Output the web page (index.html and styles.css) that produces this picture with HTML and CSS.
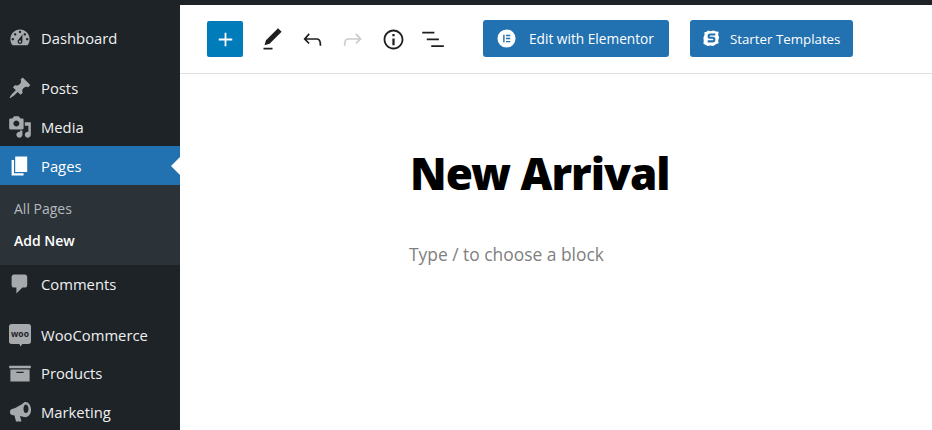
FILE: index.html
```html
<!DOCTYPE html>
<html lang="en">
<head>
<meta charset="utf-8">
<title>Edit Page</title>
<link rel="stylesheet" href="styles.css">
</head>
<body>
<div class="topbar"></div>
<div class="layout">
  <nav class="sidebar">
    <ul class="menu">
      <li class="item"><svg class="dash" viewBox="0 0 20 20"><path fill-rule="evenodd" d="M3.76 16h12.48c1.1-1.37 1.76-3.11 1.76-5 0-4.42-3.58-8-8-8s-8 3.58-8 8c0 1.89.66 3.63 1.76 5zM10 4c.55 0 1 .45 1 1s-.45 1-1 1-1-.45-1-1 .45-1 1-1zM6 6c.55 0 1 .45 1 1s-.45 1-1 1-1-.45-1-1 .45-1 1-1zm8 0c.55 0 1 .45 1 1s-.45 1-1 1-1-.45-1-1 .45-1 1-1zm-5.37 5.55L12 7v6c0 1.1-.9 2-2 2s-2-.9-2-2c0-.57.24-1.08.63-1.45zM4 10c.55 0 1 .45 1 1s-.45 1-1 1-1-.45-1-1 .45-1 1-1zm12 0c.55 0 1 .45 1 1s-.45 1-1 1-1-.45-1-1 .45-1 1-1zm-5 3c0-.55-.45-1-1-1s-1 .45-1 1 .45 1 1 1 1-.45 1-1z"/></svg><span>Dashboard</span></li>
      <li class="item sep"><svg class="dash" viewBox="0 0 20 20"><path d="M10.44 3.02l1.82-1.82 6.36 6.35-1.83 1.82c-1.05-.68-2.48-.57-3.41.36l-.75.75c-.92.93-1.04 2.35-.35 3.41l-1.83 1.82-2.41-2.41-2.8 2.79c-.42.42-3.38 2.71-3.8 2.29s1.86-3.39 2.28-3.81l2.79-2.79L4.1 9.36l1.83-1.82c1.05.69 2.48.57 3.4-.36l.75-.75c.93-.92 1.05-2.35.36-3.41z"/></svg><span>Posts</span></li>
      <li class="item"><svg class="dash" viewBox="0 0 20 20"><path fill-rule="evenodd" d="M13 11V4c0-.55-.45-1-1-1h-1.67L9 1H5L3.67 3H2c-.55 0-1 .45-1 1v7c0 .55.45 1 1 1h10c.55 0 1-.45 1-1zM7 4.500c1.380 0 2.500 1.120 2.500 2.500S8.380 9.500 7 9.500 4.500 8.380 4.500 7 5.620 4.500 7 4.500zM14 6h5v10.500c0 1.380-1.120 2.500-2.500 2.500S14 17.880 14 16.500s1.120-2.500 2.500-2.500c.17 0 .34.02.5.05V9h-3V6zm-4 8.050V13h2v3.500c0 1.380-1.120 2.500-2.500 2.500S7 17.880 7 16.500 8.120 14 9.500 14c.17 0 .34.02.5.05z"/></svg><span>Media</span></li>
      <li class="item current"><svg class="dash" viewBox="0 0 20 20"><path d="M6 15V2h10v13H6zm-1 1h8v2H3V5h2v11z"/></svg><span>Pages</span></li>
      <li class="submenu">
        <a class="sublink">All Pages</a>
        <a class="sublink active">Add New</a>
      </li>
      <li class="item"><svg class="dash" viewBox="0 0 20 20"><path d="M5 2h9c1.100 0 2 .9 2 2v7c0 1.100-.9 2-2 2h-2l-5 5v-5H5c-1.100 0-2-.9-2-2V4c0-1.100.9-2 2-2z"/></svg><span>Comments</span></li>
      <li class="item sep"><svg class="dash" viewBox="0 0 24 24"><path d="M3.500 1h17c1.500 0 2.500 1 2.500 2.500v15c0 1.500-1 2.500-2.500 2.500h-6l-2.300 2.500L11.500 21h-8C2 21 1 20 1 18.500v-15C1 2 2 1 3.500 1z"/><text class="woo-text" x="12" y="13.500" text-anchor="middle">woo</text></svg><span>WooCommerce</span></li>
      <li class="item"><svg class="dash" viewBox="0 0 20 20"><path fill-rule="evenodd" d="M19 4v2H1V4h18zM2 7h16v10H2V7zm11 3V9H7v1h6z"/></svg><span>Products</span></li>
      <li class="item"><svg class="dash" viewBox="0 0 24 24"><path fill-rule="evenodd" d="M16 2.500C13 5 8 8 4 9c-1.500.3-2 1.500-2 3s.5 2.500 2 3l2.500.5 1.500 6h5.500L12 16l4 1c4 1 7.500-3 7-8s-4-8-7-6.500zM18 4.500c-1.500 0-2.500 2-2.500 4.500s1 4 2.500 4 2.500-2 2.500-4-1-4.500-2.500-4.500z"/></svg><span>Marketing</span></li>
    </ul>
  </nav>
  <main class="editor">
    <header class="toolbar">
      <button class="inserter"><svg class="ico" viewBox="0 0 24 24"><path d="M18 11.200h-5.200V6h-1.600v5.200H6v1.600h5.200V18h1.600v-5.200H18z"/></svg></button>
      <div class="tools">
        <svg class="ico" viewBox="0 0 24 24"><path d="M20.100 5.100L16.900 2 6.200 12.700l-1.300 4.400 4.500-1.300L20.100 5.100zM4 20.800h8v-1.500H4v1.500z"/></svg>
        <svg class="ico" viewBox="0 0 24 24"><path d="M18.300 11.700c-.6-.6-1.400-.9-2.300-.9H6.700l2.900-3.300-1.100-1-4.500 5L8.500 16l1-1-2.700-2.700H16c.5 0 .9.2 1.300.5 1 1 1 3.400 1 4.500v.3h1.500v-.2c0-1.500 0-4.300-1.500-5.700z"/></svg>
        <svg class="ico off" viewBox="0 0 24 24"><path d="M15.600 6.500l-1.100 1 2.900 3.300H8c-.9 0-1.700.3-2.300.9-1.400 1.500-1.400 4.200-1.400 5.600v.2h1.500v-.3c0-1.100 0-3.500 1-4.500.3-.3.7-.5 1.300-.5h9.200L14.500 15l1.100 1.100 4.600-4.600-4.600-5z"/></svg>
        <svg class="ico" viewBox="0 0 24 24"><path d="M12 3.200c-4.800 0-8.800 3.900-8.800 8.800 0 4.800 3.900 8.800 8.800 8.800 4.800 0 8.800-3.900 8.800-8.800 0-4.800-4-8.800-8.800-8.800zm0 16c-4 0-7.200-3.300-7.200-7.200C4.800 8 8 4.800 12 4.800s7.200 3.300 7.200 7.200c0 4-3.200 7.200-7.200 7.200zM11 17h2v-6h-2v6zm0-8h2V7h-2v2z"/></svg>
        <svg class="ico" viewBox="0 0 24 24"><path d="M2 5.200h10.800v1.500H2zM6 11.200h10.800v1.500H6zM10 17.200h11.200v1.500H10z"/></svg>
      </div>
      <button class="wide elementor"><svg class="btn-ico" viewBox="0 0 20 20"><circle cx="10" cy="10" r="9.500" fill="#fff"/><path fill="#2271b1" d="M6.500 6h1.500v8H6.500zM9.500 6h4.500v1.500H9.500zM9.500 9.250h4.500v1.500H9.500zM9.500 12.500h4.500V14H9.500z"/></svg><span class="elementor-label">Edit with Elementor</span></button>
      <button class="wide starter"><svg class="btn-ico" viewBox="0 0 20 20"><path fill="#fff" d="M6 1.500l3 .8 3-.8 3 1 2.500 .5-.5 3 1 3-1 3 .5 3-3 1-2.500 2-3-.6-3 .6-2.500-1.500-2-.9.300-3L1.500 9l1.200-3-.2-2.500L5 3z"/><path fill="none" stroke="#2271b1" stroke-width="2.200" d="M14 5.800H8.500c-2 0-2 3.400 0 3.400h3c2 0 2 3.800 0 3.800H6"/></svg><span class="starter-label">Starter Templates</span></button>
    </header>
    <section class="canvas">
      <h1 class="title">New Arrival</h1>
      <p class="placeholder">Type / to choose a block</p>
    </section>
  </main>
</div>
</body>
</html>
```
FILE: styles.css
```css
* { box-sizing: border-box; }
html, body { margin: 0; height: 430px; overflow: hidden; background: #fff; }
body { font-family: "Open Sans", "Noto Sans", "Liberation Sans", sans-serif; }
.topbar { height: 5px; background: #1d2327; }
.layout { display: flex; height: 425px; }
.sidebar { width: 180px; flex: none; background: #1d2327; overflow: hidden; }
.menu { list-style: none; margin: 0; padding: 13.6px 0 0; }
.item { height: 38.6px; display: flex; align-items: center; padding-left: 8px; gap: 9px; color: #f0f0f1; font-size: 14.8px; position: relative; }
.sep { margin-top: 12px; }
.dash { width: 24px; height: 24px; fill: #a7aaad; flex: none; }
.woo-text { font-size: 8.500px; font-weight: 700; fill: #1d2327; font-family: "Open Sans", sans-serif; }
.current { background: #2271b1; color: #fff; }
.current .dash { fill: #fff; }
.current::after { content: ""; position: absolute; right: 0; top: 50%; margin-top: -9px; border: 9px solid transparent; border-right-color: #fff; border-left-width: 0; }
.submenu { background: #2c3338; padding: 8px 0; }
.sublink { display: flex; align-items: center; height: 32px; padding-left: 14px; font-size: 14px; color: #b4b9be; }
.active { color: #fff; font-weight: 600; }
.editor { flex: 1; min-width: 0; }
.toolbar { height: 69px; border-bottom: 1px solid #e0e0e0; display: flex; align-items: center; padding-left: 27px; background: #fff; }
button { border: 0; font-family: inherit; padding: 0; color: #fff; display: flex; align-items: center; }
.inserter { width: 36px; height: 36px; background: #007cba; border-radius: 2px; justify-content: center; }
.inserter .ico { fill: #fff; }
.ico { width: 27px; height: 27px; fill: #1e1e1e; flex: none; }
.off { fill: #ccc; }
.tools { display: flex; gap: 13.4px; margin-left: 15.500px; }
.wide { height: 37px; margin-bottom: 1px; background: #2271b1; border-radius: 3px; }
.elementor-label { font-size: 13.700px; }
.starter-label { font-size: 13.300px; }
.btn-ico { width: 19px; height: 19px; flex: none; }
.elementor { width: 186px; margin-left: 35.900px; padding-left: 14px; gap: 13px; }
.starter { width: 163px; margin-left: 21px; padding-left: 12px; gap: 9px; }
.canvas { padding: 74px 0 0 230px; }
.title { margin: 0; color: #000; font-family: "Noto Sans", "Open Sans", sans-serif; font-size: 44px; line-height: 50px; font-weight: 900; letter-spacing: -1px; }
.placeholder { margin: 43px 0 0 -1px; color: #808080; font-size: 17.400px; line-height: 26px; }
```
